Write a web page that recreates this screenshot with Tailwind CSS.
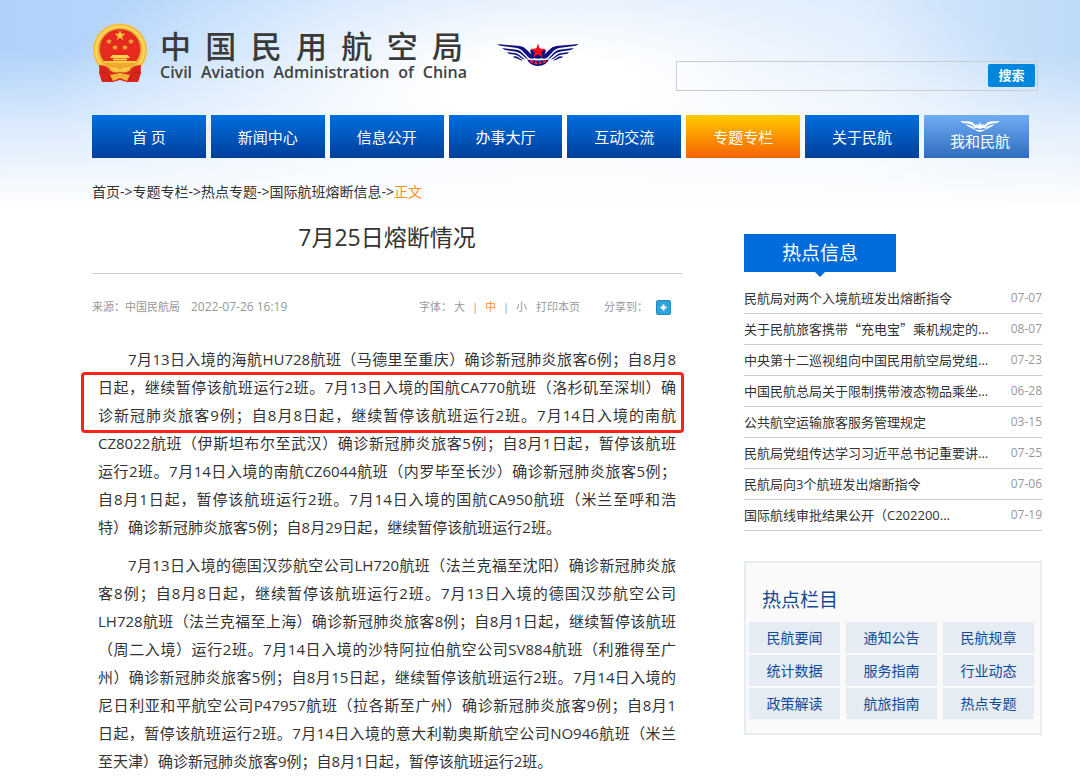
<!DOCTYPE html>
<html lang="zh-CN">
<head>
    <meta charset="UTF-8">
    <meta name="viewport" content="width=device-width, initial-scale=1.0">
    <title>7月25日熔断情况</title>
    <script src="https://cdn.jsdelivr.net/npm/@tailwindcss/browser@4"></script>
</head>
<body class="relative bg-white text-[#333] font-['Open_Sans','Noto_Sans_CJK_SC',sans-serif]">

    <!-- SKY -->
    <div class="absolute inset-x-0 top-0 -z-10 h-[210px] bg-[linear-gradient(to_bottom,transparent_25%,rgba(255,255,255,0.55)_60%,#ffffff_100%),radial-gradient(ellipse_45%_80%_at_50%_42%,#ffffff_20%,transparent_100%),linear-gradient(to_right,#b0d2fa_0%,#b9d8fb_22%,#c6defb_45%,#d6e8fc_80%,#bedaf8_100%)]"></div>

    <div class="pl-[92px] pr-[38px]">

        <header class="flex h-[115px] items-start justify-between">
            <div class="flex items-start pt-[23px]">
                <svg class="h-[60px] w-[56px]" viewBox="0 0 56 60">
                    <path d="M8 41 L48 41 L49 50 L46 59 L35 59 L28 57 L21 59 L10 59 L7 50 Z" fill="#d9251c"/>
                    <ellipse cx="28" cy="27" rx="27" ry="26.5" fill="#f5bd3a"/>
                    <ellipse cx="28" cy="27" rx="24" ry="23.5" fill="none" stroke="#fbd765" stroke-width="2"/>
                    <ellipse cx="28" cy="26" rx="20.5" ry="20" fill="#e62a20" stroke="#c98a1c" stroke-width="0.7"/>
                    <path d="M28 7 L29.300 10.800 L33.300 10.800 L30.100 13.200 L31.300 17 L28 14.700 L24.700 17 L25.900 13.200 L22.700 10.800 L26.700 10.800 Z" fill="#fbcf3c"/>
                    <g fill="#f6b83a">
                        <path id="st" d="M17 15.500 L17.800 17.500 L20 17.600 L18.300 18.900 L18.900 21 L17 19.800 L15.100 21 L15.700 18.900 L14 17.600 L16.200 17.500 Z"/>
                        <use href="#st" x="22"/>
                        <use href="#st" x="6" y="6"/>
                        <use href="#st" x="16" y="6"/>
                    </g>
                    <path d="M20 32 h16 l2 3 h-20 Z M21 35.500 h14 v2 h-14 Z M12 38 h32 v3 h-32 Z" fill="#fbcf4a"/>
                    <path d="M11 40 H45 Q38 48 28 48 Q18 48 11 40 Z" fill="#f3a92c"/>
                    <path d="M7 42 Q15 42 19 48 L28 46 L37 48 Q41 42 49 42 L48 50 Q41 47 37 53 L28 50 L19 53 Q15 47 8 50 Z" fill="#d9251c"/>
                    <path d="M17 44 Q23 42 28 46 Q33 42 39 44 Q38 51 28 49 Q18 51 17 44 Z" fill="#f8c848" stroke="#d98b1c" stroke-width="0.6"/>
                    <path d="M18 52 Q28 49 38 52 L35 58 L28 55 L21 58 Z" fill="#f4b437"/>
                    <path d="M9 49 L16 50 L19 58 M47 49 L40 50 L37 58" fill="none" stroke="#b51912" stroke-width="1"/>
                </svg>
                <div class="ml-3 w-[307px]">
                    <h1 class="flex justify-between pr-1 text-[31px] leading-[44px] font-medium text-[#3a3a3a] font-['Noto_Sans_CJK_SC',sans-serif]">
                        <span>中</span><span>国</span><span>民</span><span>用</span><span>航</span><span>空</span><span>局</span>
                    </h1>
                    <p class="flex justify-between text-[16px] leading-[10px] font-semibold text-[#3f4246]">
                        <span>Civil</span><span>Aviation</span><span>Administration</span><span>of</span><span>China</span>
                    </p>
                </div>
                <svg class="mt-5 ml-[30px] h-[24px] w-[82px]" viewBox="0 0 82 24">
                    <g id="wing" fill="#10127f">
                        <path d="M0 1 L23 3 Q27 3.500 30 7 L38 15 Q34 17 31 14 L25 7.500 Q23 5.500 20 5 L3 2.800 Z"/>
                        <path d="M5 5 L20 6.800 Q23 7.200 25 9.500 L31 16 L29 15.500 L23.500 10.500 Q21 8.700 18 8.400 L8 7 Z"/>
                        <path d="M10 9 L19 10.200 Q21 10.500 23 12.500 L28 16.500 L25.500 16 L21 12.800 Q19 11.800 17 11.600 L12 11 Z"/>
                        <path d="M16 13.200 L20 13.600 L26 17.500 L23.500 17.300 L19.500 15.300 L17.500 15 Z"/>
                    </g>
                    <use href="#wing" transform="translate(82 0) scale(-1 1)"/>
                    <path d="M33 7 L41 5 L49 7 L47 14 Q41 17.500 35 14 Z" fill="#10127f"/>
                    <path d="M30 16.500 Q41 18.500 52 16.500 Q49 23 41 23 Q33 23 30 16.500 Z" fill="#10127f"/>
                    <path d="M33 18 Q41 22 49 18" fill="none" stroke="#ea2340" stroke-width="2.500" stroke-dasharray="3 1.500"/>
                    <path d="M41 0.500 L42.800 5.700 L48.500 5.800 L44 9.200 L45.700 14.500 L41 11.300 L36.300 14.500 L38 9.200 L33.500 5.800 L39.200 5.700 Z" fill="#fa0d1a"/>
                </svg>
            </div>

            <form class="mt-[61px] mr-1 flex h-[30px] w-[362px] items-start border border-[#ccc]">
                <input type="text" aria-label="搜索" class="h-full min-w-0 flex-1 bg-transparent px-2 text-[13px] outline-none">
                <button type="button" class="mt-[2px] mr-[2px] h-[23px] w-[47px] rounded-xs bg-[#0086dc] text-[13px] leading-[23px] font-bold text-white">搜索</button>
            </form>
        </header>

        <!-- MENU -->
        <nav class="mr-[13px] flex h-[43px] gap-[5px] text-center text-[15px] leading-[44px] text-white">
            <a href="#" class="flex-1 bg-linear-to-b from-[#006fdf] to-[#003f9b]">首 页</a>
            <a href="#" class="flex-1 bg-linear-to-b from-[#006fdf] to-[#003f9b]">新闻中心</a>
            <a href="#" class="flex-1 bg-linear-to-b from-[#006fdf] to-[#003f9b]">信息公开</a>
            <a href="#" class="flex-1 bg-linear-to-b from-[#006fdf] to-[#003f9b]">办事大厅</a>
            <a href="#" class="flex-1 bg-linear-to-b from-[#006fdf] to-[#003f9b]">互动交流</a>
            <a href="#" class="flex-1 bg-linear-to-b from-[#ffcc00] via-[#fb9400] to-[#f46200]">专题专栏</a>
            <a href="#" class="flex-1 bg-linear-to-b from-[#006fdf] to-[#003f9b]">关于民航</a>
            <a href="#" class="flex w-[105px] flex-col items-center bg-linear-to-b from-[#6fadf3] to-[#306cbe] pt-[5px] pl-[7px]">
                <svg class="h-[12px] w-[40px] shrink-0" viewBox="0 0 40 12">
                    <g id="w2" fill="#fff">
                        <path d="M0 1 L10 1.500 Q13 2 15 4.500 L18 8 L15 8 L12 5 Q10 3.800 8 3.600 L3 3 Z"/>
                        <path d="M5 4.500 L9 5 Q11 5.300 13 7 L16 9.500 L12 8.500 Z"/>
                    </g>
                    <use href="#w2" transform="translate(40 0) scale(-1 1)"/>
                    <path d="M16 4 L19 5 L20 1.500 L21 5 L24 4 L23 8 L20 9 L17 8 Z" fill="#fff"/>
                    <path d="M14 9 Q20 11 26 9 Q20 15 14 9 Z" fill="#fff"/>
                </svg>
                <span class="leading-[18px]">我和民航</span>
            </a>
        </nav>

        <div class="flex gap-[62px]">

            <main class="min-w-0 flex-1">
                <div class="mt-6 text-[14px] leading-[20px]">
                    <a href="#">首页</a>-&gt;<a href="#">专题专栏</a>-&gt;<a href="#">热点专题</a>-&gt;<a href="#">国际航班熔断信息</a>-&gt;<span class="text-[#ff8f1c]">正文</span>
                </div>

                <h2 class="mt-5 border-b border-[#ccc] pb-5 text-center text-[23px] leading-[31px]">7月25日熔断情况</h2>

                <div class="mt-[23px] flex items-center text-[11px] leading-[20px] text-[#999]">
                    <span>来源：中国民航局</span>
                    <span class="ml-[11px] text-[12px]">2022-07-26 16:19</span>
                    <span class="ml-auto">字体：</span>
                    <button type="button" class="ml-[2px]">大</button>
                    <span class="mx-[7px]">|</span>
                    <button type="button" class="text-[#ff8f1c]">中</button>
                    <span class="mx-[7px]">|</span>
                    <button type="button">小</button>
                    <button type="button" class="ml-[9px]">打印本页</button>
                    <span class="ml-[24px]">分享到：</span>
                    <button type="button" aria-label="分享" class="mr-[11px] ml-2 flex h-[15px] w-[15px] items-center justify-center rounded-xs border border-[#2089c4] bg-[#2ea3dd]">
                        <svg class="h-[7px] w-[7px]" viewBox="0 0 7 7"><path d="M3.500 0.500 V6.500 M0.500 3.500 H6.500" stroke="#fff" stroke-width="2"/></svg>
                    </button>
                </div>

                <article class="mt-7 flex flex-col gap-[10px] px-[6px] text-[15px] leading-[28px] whitespace-nowrap">
                    <p class="text-justify">
                        <span class="block pl-[30px] [text-align-last:justify]">7月13日入境的海航HU728航班（马德里至重庆）确诊新冠肺炎旅客6例；自8月8</span>
                        <span class="relative block">
                            <span class="block [text-align-last:justify]">日起，继续暂停该航班运行2班。7月13日入境的国航CA770航班（洛杉矶至深圳）确</span>
                            <span class="block [text-align-last:justify]">诊新冠肺炎旅客9例；自8月8日起，继续暂停该航班运行2班。7月14日入境的南航</span>
                            <span class="absolute -top-px -right-[8px] -bottom-[4px] -left-[17px] rounded-sm border-3 border-[#fb2218]"></span>
                        </span>
                        <span class="block [text-align-last:justify]">CZ8022航班（伊斯坦布尔至武汉）确诊新冠肺炎旅客5例；自8月1日起，暂停该航班</span>
                        <span class="block [text-align-last:justify]">运行2班。7月14日入境的南航CZ6044航班（内罗毕至长沙）确诊新冠肺炎旅客5例；</span>
                        <span class="block [text-align-last:justify]">自8月1日起，暂停该航班运行2班。7月14日入境的国航CA950航班（米兰至呼和浩</span>
                        <span class="block">特）确诊新冠肺炎旅客5例；自8月29日起，继续暂停该航班运行2班。</span>
                    </p>
                    <p class="text-justify">
                        <span class="block pl-[30px] [text-align-last:justify]">7月13日入境的德国汉莎航空公司LH720航班（法兰克福至沈阳）确诊新冠肺炎旅</span>
                        <span class="block [text-align-last:justify]">客8例；自8月8日起，继续暂停该航班运行2班。7月13日入境的德国汉莎航空公司</span>
                        <span class="block [text-align-last:justify]">LH728航班（法兰克福至上海）确诊新冠肺炎旅客8例；自8月1日起，继续暂停该航班</span>
                        <span class="block [text-align-last:justify]">（周二入境）运行2班。7月14日入境的沙特阿拉伯航空公司SV884航班（利雅得至广</span>
                        <span class="block [text-align-last:justify]">州）确诊新冠肺炎旅客5例；自8月15日起，继续暂停该航班运行2班。7月14日入境的</span>
                        <span class="block [text-align-last:justify]">尼日利亚和平航空公司P47957航班（拉各斯至广州）确诊新冠肺炎旅客9例；自8月1</span>
                        <span class="block [text-align-last:justify]">日起，暂停该航班运行2班。7月14日入境的意大利勒奥斯航空公司NO946航班（米兰</span>
                        <span class="block">至天津）确诊新冠肺炎旅客9例；自8月1日起，暂停该航班运行2班。</span>
                    </p>
                </article>
            </main>

            <aside class="w-[298px] shrink-0 pt-[76px]">
                <h3 class="relative h-[38px] w-[152px] bg-[#006cdb] text-center text-[19px] leading-[38px] text-white">
                    热点信息
                    <span class="absolute top-full left-1/2 h-[5px] w-[10px] -translate-x-1/2 bg-[#006cdb] [clip-path:polygon(0_0,100%_0,50%_100%)]"></span>
                </h3>
                <ul class="mt-[11px] text-[13px] leading-[30px]">
                    <li class="flex justify-between border-b border-[#ccc]"><a href="#">民航局对两个入境航班发出熔断指令</a><span class="text-[12px] text-[#999]">07-07</span></li>
                    <li class="flex justify-between border-b border-[#ccc]"><a href="#">关于民航旅客携带<span class="font-['Noto_Sans_CJK_SC',sans-serif]">“</span>充电宝<span class="font-['Noto_Sans_CJK_SC',sans-serif]">”</span>乘机规定的...</a><span class="text-[12px] text-[#999]">08-07</span></li>
                    <li class="flex justify-between border-b border-[#ccc]"><a href="#">中央第十二巡视组向中国民用航空局党组...</a><span class="text-[12px] text-[#999]">07-23</span></li>
                    <li class="flex justify-between border-b border-[#ccc]"><a href="#">中国民航总局关于限制携带液态物品乘坐...</a><span class="text-[12px] text-[#999]">06-28</span></li>
                    <li class="flex justify-between border-b border-[#ccc]"><a href="#">公共航空运输旅客服务管理规定</a><span class="text-[12px] text-[#999]">03-15</span></li>
                    <li class="flex justify-between border-b border-[#ccc]"><a href="#">民航局党组传达学习习近平总书记重要讲...</a><span class="text-[12px] text-[#999]">07-25</span></li>
                    <li class="flex justify-between border-b border-[#ccc]"><a href="#">民航局向3个航班发出熔断指令</a><span class="text-[12px] text-[#999]">07-06</span></li>
                    <li class="flex justify-between border-b border-[#ccc]"><a href="#">国际航线审批结果公开（C202200...</a><span class="text-[12px] text-[#999]">07-19</span></li>
                </ul>

                <section class="mt-[30px] border-2 border-[#e5ecf4] bg-[#fafafa] pt-[22px] pr-[6px] pb-[14px] pl-[3px] text-[#114a97]">
                    <h3 class="pl-[13px] text-[19px] leading-[30px]">热点栏目</h3>
                    <div class="mt-[7px] grid grid-cols-3 gap-x-[6px] gap-y-[2px] text-center text-[14px] leading-[31px]">
                        <a href="#" class="bg-[#e5ecf4]">民航要闻</a>
                        <a href="#" class="bg-[#e5ecf4]">通知公告</a>
                        <a href="#" class="bg-[#e5ecf4]">民航规章</a>
                        <a href="#" class="bg-[#e5ecf4]">统计数据</a>
                        <a href="#" class="bg-[#e5ecf4]">服务指南</a>
                        <a href="#" class="bg-[#e5ecf4]">行业动态</a>
                        <a href="#" class="bg-[#e5ecf4]">政策解读</a>
                        <a href="#" class="bg-[#e5ecf4]">航旅指南</a>
                        <a href="#" class="bg-[#e5ecf4]">热点专题</a>
                    </div>
                </section>
            </aside>
        </div>
    </div>
</body>
</html>
